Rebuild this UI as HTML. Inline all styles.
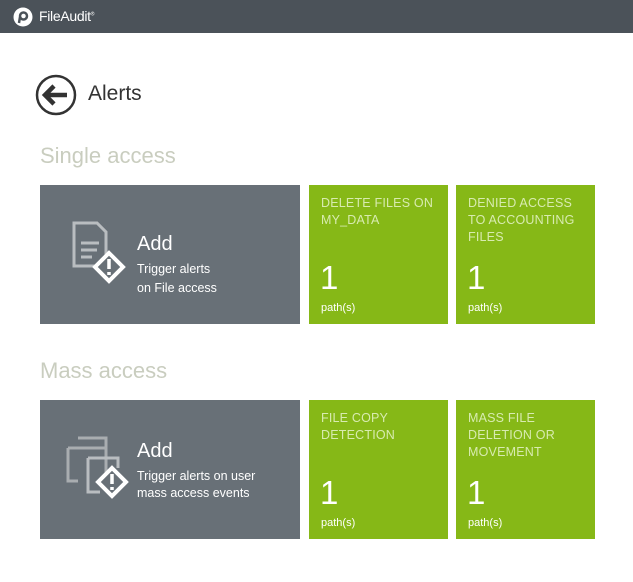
<!DOCTYPE html>
<html><head><style>
body{margin:0;width:633px;height:582px;background:#fff;font-family:"Segoe UI","Liberation Sans",sans-serif;position:relative;overflow:hidden}
.hdr{position:absolute;left:0;top:0;width:633px;height:33px;background:#4b5259}
.hdr span{position:absolute;left:39px;top:8px;color:#fff;font-size:14px;letter-spacing:-0.3px}
.abs{position:absolute}
.big{position:absolute;width:260px;height:139px;background:#687077;color:#fff}
.g{position:absolute;width:139px;height:139px;background:#86b817;color:#fff}
.g .t{position:absolute;left:12px;top:10px;font-size:12.5px;line-height:17px;color:#d8ebb0;letter-spacing:0.2px}
.g .n{position:absolute;left:11px;top:74px;font-size:33px;font-weight:300}
.g .p{position:absolute;left:12px;top:117px;font-size:11px}
.sec{position:absolute;left:40px;font-size:22px;color:#c9cdbf;font-weight:300}
.add{position:absolute;left:97px;font-size:20px}
.desc{position:absolute;left:97px;font-size:12.5px;line-height:19px}
</style></head><body>
<div class="hdr">
<svg class="abs" style="left:13px;top:7px" width="20" height="20" viewBox="0 0 20 20"><circle cx="10" cy="10" r="9.5" fill="#fff"/><circle cx="10.5" cy="9" r="3.5" fill="none" stroke="#4b5259" stroke-width="2.5"/><path d="M7 10 L6 16" stroke="#4b5259" stroke-width="2.5"/></svg>
<span>FileAudit<sup style="font-size:5px">®</sup></span>
</div>
<svg class="abs" style="left:35px;top:74px" width="42" height="42" viewBox="0 0 42 42"><circle cx="21" cy="21" r="19" fill="none" stroke="#333" stroke-width="2.5"/><path d="M32 21H11M19 12L10 21L19 30" fill="none" stroke="#333" stroke-width="4.5"/></svg>
<div class="abs" style="left:88px;top:82px;font-size:21px;color:#333;font-weight:300">Alerts</div>
<div class="sec" style="top:143px">Single access</div>
<div class="big" style="left:40px;top:185px">
<svg class="abs" style="left:32px;top:36px" width="56" height="66" viewBox="0 0 56 66"><path d="M2 2H25L34 11V45H2Z" fill="none" stroke="#b9bdc0" stroke-width="3"/><path d="M9 22H27M9 29H25M9 36H20" stroke="#b9bdc0" stroke-width="3"/><path d="M37 32L51 46L37 60L23 46Z" fill="#687077" stroke="#fff" stroke-width="4"/><path d="M37 38V48M37 51V54" stroke="#fff" stroke-width="3.5"/></svg>
<div class="add" style="top:48px">Add</div>
<div class="desc" style="top:75px">Trigger alerts<br>on File access</div>
</div>
<div class="g" style="left:309px;top:185px"><div class="t">DELETE FILES ON<br>MY_DATA</div><div class="n">1</div><div class="p">path(s)</div></div>
<div class="g" style="left:456px;top:185px"><div class="t">DENIED ACCESS<br>TO ACCOUNTING<br>FILES</div><div class="n">1</div><div class="p">path(s)</div></div>
<div class="sec" style="top:358px">Mass access</div>
<div class="big" style="left:40px;top:400px">
<svg class="abs" style="left:26px;top:36px" width="64" height="66" viewBox="0 0 64 66"><path d="M12 2H40V20M2 12H30M2 12V45H12" fill="none" stroke="#a9adb0" stroke-width="3"/><path d="M12 12H40V45" fill="none" stroke="#a9adb0" stroke-width="3"/><path d="M22 22H52V32M22 22V56H34" fill="none" stroke="#b9bdc0" stroke-width="3"/><path d="M46 32L60 46L46 60L32 46Z" fill="#687077" stroke="#fff" stroke-width="4"/><path d="M46 38V48M46 51V54" stroke="#fff" stroke-width="3.5"/></svg>
<div class="add" style="top:40px">Add</div>
<div class="desc" style="top:68px;line-height:17px">Trigger alerts on user<br>mass access events</div>
</div>
<div class="g" style="left:309px;top:400px"><div class="t">FILE COPY<br>DETECTION</div><div class="n">1</div><div class="p">path(s)</div></div>
<div class="g" style="left:456px;top:400px"><div class="t">MASS FILE<br>DELETION OR<br>MOVEMENT</div><div class="n">1</div><div class="p">path(s)</div></div>
</body></html>
